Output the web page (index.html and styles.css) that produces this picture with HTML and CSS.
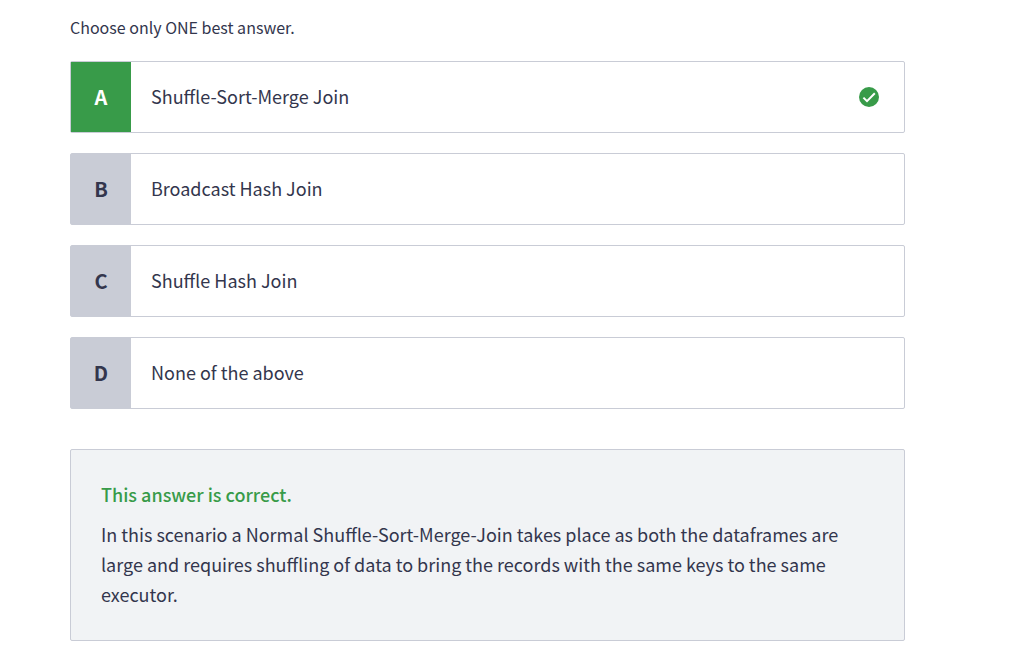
FILE: index.html
```html
<!DOCTYPE html>
<html lang="en">
<head>
<meta charset="utf-8">
<meta name="viewport" content="width=device-width, initial-scale=1">
<title>Question</title>
<link rel="stylesheet" href="styles.css">
</head>
<body>
<main class="question">
  <p class="hint" id="hint">Choose only ONE best answer.</p>
  <div class="answers" role="group" aria-labelledby="hint">
    <button type="button" class="answer answer-correct">
      <span class="letter">A</span>
      <span class="label">Shuffle-Sort-Merge Join</span>
      <svg class="check" viewBox="0 0 20 20" role="img" aria-label="Correct">
        <circle cx="10" cy="10" r="10" fill="#389b49"/>
        <path d="M4.4 10.6 8 14.2 15.8 6.2" fill="none" stroke="#fff" stroke-width="2"/>
      </svg>
    </button>
    <button type="button" class="answer">
      <span class="letter">B</span>
      <span class="label">Broadcast Hash Join</span>
    </button>
    <button type="button" class="answer">
      <span class="letter">C</span>
      <span class="label">Shuffle Hash Join</span>
    </button>
    <button type="button" class="answer">
      <span class="letter">D</span>
      <span class="label">None of the above</span>
    </button>
  </div>
  <section class="explanation">
    <h2 class="verdict">This answer is correct.</h2>
    <p class="reason">In this scenario a Normal Shuffle-Sort-Merge-Join takes place as both the dataframes are large and requires shuffling of data to bring the records with the same keys to the same executor.</p>
  </section>
</main>
</body>
</html>
```
FILE: styles.css
```css
* {
  box-sizing: border-box;
}

body {
  margin: 0;
  background: #fff;
  color: #33364d;
  font-family: "Source Sans Pro", "Noto Sans CJK SC", sans-serif;
  font-size: 18px;
  line-height: 30px;
}

.question {
  max-width: 975px;
  padding: 12px 70px 9px;
}

.hint {
  margin: 0 0 19px;
  font-size: 16px;
}

.answers {
  display: flex;
  flex-direction: column;
  gap: 20px;
}

.answer {
  display: flex;
  align-items: center;
  width: 100%;
  min-height: 72px;
  padding: 0;
  border: 1px solid #c9ccd6;
  border-radius: 2px;
  background: #fff;
  color: inherit;
  font: inherit;
  text-align: left;
  cursor: pointer;
}

.letter {
  display: flex;
  align-items: center;
  justify-content: center;
  align-self: stretch;
  width: 60px;
  background: #c9ccd6;
  font-size: 20px;
  font-weight: 700;
}

.answer-correct .letter {
  background: #389b49;
  color: #fff;
}

.label {
  flex: 1;
  padding: 0 20px 2px;
}

.check {
  width: 20px;
  height: 20px;
  margin-right: 25px;
}

.explanation {
  margin-top: 40px;
  padding: 29px 30px 31px;
  border: 1px solid #c9ccd6;
  border-radius: 2px;
  background: #f1f3f5;
}

.verdict {
  margin: 0 0 10px;
  color: #389b49;
  font-size: 18px;
  font-weight: 500;
}

.reason {
  margin: 0;
}
```
